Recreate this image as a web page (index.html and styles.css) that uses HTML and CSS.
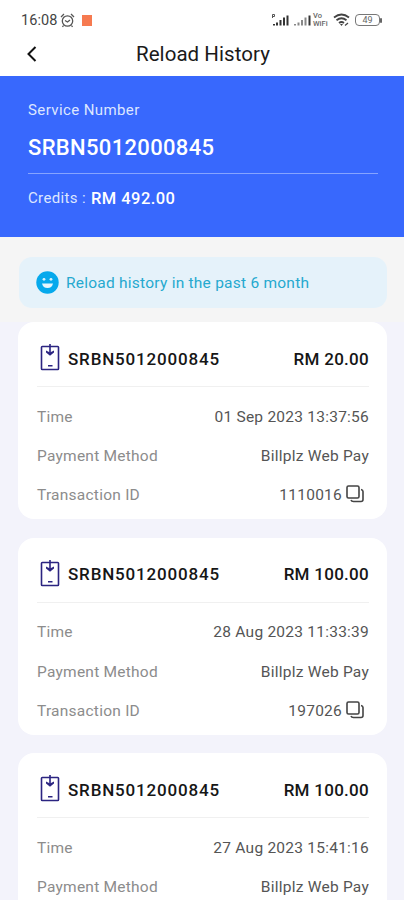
FILE: index.html
```
<!DOCTYPE html>
<html lang="en">
<head>
<meta charset="utf-8">
<title>Reload History</title>
<link rel="stylesheet" href="styles.css">
</head>
<body>
<svg class="defs" width="0" height="0" aria-hidden="true">
  <symbol id="device" viewBox="0 0 20 27">
    <rect x="1.500" y="2.500" width="17" height="23" rx="0.800" fill="none" stroke="#2b2481" stroke-width="1.600"/>
    <path d="M10 0v9M8 21.800h4.500" fill="none" stroke="#2b2481" stroke-width="1.600"/>
    <path d="M6 6.500L10 8.500l4-2v2L10 11.800 6 8.500z" fill="#2b2481"/>
  </symbol>
  <symbol id="copy" viewBox="0 0 18 18">
    <rect x="1" y="1" width="12" height="12" rx="1.500" fill="none" stroke="#444" stroke-width="1.600"/>
    <path d="M15 4.500q2 .3 2 2v8q0 2-2 2H7.500q-2 0-2.500-1.500" fill="none" stroke="#444" stroke-width="1.600"/>
  </symbol>
</svg>
<div class="status">
  <span class="clock">16:08</span>
  <svg class="alarm" width="15" height="15" viewBox="0 0 15 15" fill="none" stroke="#555" stroke-width="1.300"><circle cx="7.500" cy="8" r="5.200"/><path d="M1 4l3-3M14 4l-3-3M5 7.500l2.500 1.500L10 7M3.500 12.500L2.500 14M11.500 12.500l1 1.500"/></svg>
  <span class="chip"></span>
  <svg class="signals" width="46" height="15" viewBox="0 0 46 15"><path d="M3 12.500V11M6 12.500V9.500M9.500 12.500V7M13 12.500V4.500M16.500 12.500V2.500" stroke="#333" stroke-width="2"/><path d="M1.500 5V1.500h2v2h-2" stroke="#555" fill="none"/><path d="M24 12.500V11M27.500 12.500V9.500M31 12.500V7M34.500 12.500V4.500" stroke="#888" stroke-width="2"/><path d="M38.500 12.500V2.500" stroke="#333" stroke-width="2"/></svg>
  <span class="vowifi"><span>Vo</span><span>WiFi</span></span>
  <svg class="wifi" width="17" height="14" viewBox="0 0 17 14" fill="none" stroke="#444" stroke-width="1.800"><path d="M1 4.500q7.500-6 15 0M3.500 7.300q5-4 10 0M6 10q2.500-2 5 0"/><path d="M8.500 13l-1.500-2h3z" fill="#444" stroke="none"/><path d="M12 12.500l3-2.500" stroke-width="1.200"/></svg>
  <span class="battery">49</span><span class="tip"></span>
</div>
<header class="bar">
  <svg class="back" width="12" height="18" viewBox="0 0 12 18"><path d="M9.500 2L2.500 9l7 7" fill="none" stroke="#111" stroke-width="2"/></svg>
  <h1>Reload History</h1>
</header>
<section class="account">
  <div class="label"><span>Service Number</span></div>
  <div class="number"><span>SRBN5012000845</span></div>
  <div class="credits"><span class="key">Credits :</span><span class="sum">RM 492.00</span></div>
</section>
<div class="notice-wrap">
  <div class="notice">
    <svg width="23" height="23" viewBox="0 0 23 23"><circle cx="11.500" cy="11.500" r="11.200" fill="#06a9ec"/><circle cx="8" cy="8.300" r="1.400" fill="#d9f2fc"/><circle cx="15" cy="8.300" r="1.400" fill="#d9f2fc"/><path d="M6 12.500h11q-1 4.500-5.500 4.500T6 12.500z" fill="#e6f6fd"/></svg>
    <span>Reload history in the past 6 month</span>
  </div>
</div>
<main class="list">
  <article class="card">
    <div class="head"><svg class="device"><use href="#device"/></svg><span class="id">SRBN5012000845</span><span class="amount">RM 20.00</span></div>
    <div class="row"><span>Time</span><span>01 Sep 2023 13:37:56</span></div>
    <div class="row"><span>Payment Method</span><span>Billplz Web Pay</span></div>
    <div class="row"><span>Transaction ID</span><span>1110016</span><svg class="copy"><use href="#copy"/></svg></div>
  </article>
  <article class="card">
    <div class="head"><svg class="device"><use href="#device"/></svg><span class="id">SRBN5012000845</span><span class="amount">RM 100.00</span></div>
    <div class="row"><span>Time</span><span>28 Aug 2023 11:33:39</span></div>
    <div class="row"><span>Payment Method</span><span>Billplz Web Pay</span></div>
    <div class="row"><span>Transaction ID</span><span>197026</span><svg class="copy"><use href="#copy"/></svg></div>
  </article>
  <article class="card last">
    <div class="head"><svg class="device"><use href="#device"/></svg><span class="id">SRBN5012000845</span><span class="amount">RM 100.00</span></div>
    <div class="row"><span>Time</span><span>27 Aug 2023 15:41:16</span></div>
    <div class="row"><span>Payment Method</span><span>Billplz Web Pay</span></div>
  </article>
</main>
</body>
</html>
```
FILE: styles.css
```
* { box-sizing: border-box; }
html, body { height: 900px; overflow: hidden; }
body {
  margin: 0;
  display: flex;
  flex-direction: column;
  background: #f3f3fb;
  font-family: Roboto, "Liberation Sans", sans-serif;
  font-size: 16px;
  white-space: nowrap;
}
svg { display: block; flex: none; }
.defs { position: absolute; }

.status {
  flex: none;
  display: flex;
  align-items: center;
  height: 40px;
  padding: 0 22px 0 21px;
  background: #fff;
  color: #444;
}
.clock { font-size: 14.500px; letter-spacing: 0.1px; }
.alarm { margin-left: 2px; }
.chip { width: 10px; height: 11px; margin-left: 7px; background: #f67a50; }
.signals { margin-left: auto; }
.vowifi {
  display: flex;
  flex-direction: column;
  width: 17px;
  margin-left: -4px;
  font-size: 7.500px;
  line-height: 8px;
  font-weight: 500;
  color: #666;
}
.wifi { margin-left: 3px; }
.battery {
  width: 25px;
  height: 12px;
  margin-left: 5px;
  border: 1.500px solid #777;
  border-radius: 4px;
  font-size: 9px;
  line-height: 10px;
  text-align: center;
  color: #666;
}
.tip { width: 2px; height: 5px; border-radius: 1px; background: #666; }

.bar {
  flex: none;
  display: flex;
  align-items: center;
  height: 36px;
  padding: 0 0 8px 26px;
  background: #fff;
}
.bar h1 {
  margin: 0 0 0 98px;
  font-size: 20.500px;
  font-weight: 400;
  letter-spacing: 0.050px;
  color: #1a1a1a;
}

.account {
  flex: none;
  height: 161px;
  padding: 22px 26px 0 28px;
  background: #3868fd;
  color: #fff;
}
.label { height: 24px; line-height: 24px; font-size: 15px; letter-spacing: 0.400px; color: #dde6ff; }
.number {
  height: 52px;
  border-bottom: 1px solid #86a4ff;
  line-height: 52px;
  font-size: 22px;
  font-weight: 500;
  letter-spacing: 0.330px;
}
.credits { display: flex; align-items: center; height: 48px; }
.key { width: 63px; font-size: 15px; letter-spacing: 0.350px; color: #dde6ff; }
.sum { font-size: 16.500px; font-weight: 500; letter-spacing: 0.450px; }

.notice-wrap { flex: none; height: 85px; padding: 20px 17px 0 19px; background: #f5f5f5; }
.notice {
  display: flex;
  align-items: center;
  gap: 7px;
  height: 51px;
  padding-left: 17px;
  border-radius: 13px;
  background: #e5f2fa;
  font-size: 15.500px;
  letter-spacing: 0.240px;
  color: #25a9cf;
}

.list {
  flex: 1;
  min-height: 0;
  overflow: hidden;
  display: flex;
  flex-direction: column;
  gap: 18.300px;
  padding: 0 17px 0 18px;
}
.card { flex: none; height: 197.300px; padding: 0 18px 0 19px; border-radius: 16px; background: #fff; }
.last { flex: 1; height: auto; min-height: 0; border-radius: 16px 16px 0 0; }
.head {
  display: flex;
  align-items: center;
  height: 65px;
  padding-top: 9px;
  margin-bottom: 10px;
  border-bottom: 1px solid #f0f0f0;
  font-size: 17px;
  font-weight: 500;
  color: #161616;
}
.id { letter-spacing: 0.830px; }
.device { width: 20px; height: 27px; margin: -2px 8px 0 3px; }
.amount { margin-left: auto; letter-spacing: 0.280px; }
.row { display: flex; align-items: center; height: 39.400px; font-size: 15.500px; letter-spacing: 0.240px; color: #8c8c8c; }
.row > :nth-child(2) { margin-left: auto; color: #555; }
.copy { width: 18px; height: 18px; margin: -3px 5px 0 4px; }
```
